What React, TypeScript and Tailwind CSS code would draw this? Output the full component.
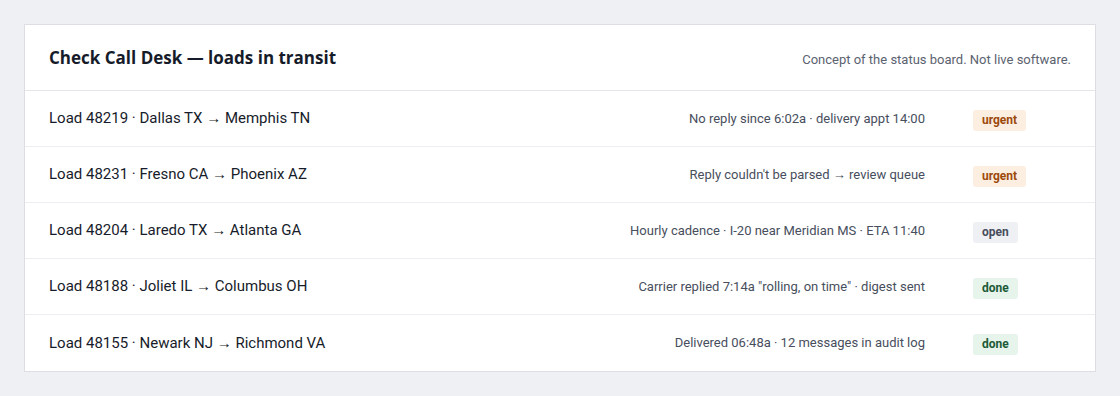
const rows = [
  {
    route: "Load 48219 · Dallas TX → Memphis TN",
    detail: "No reply since 6:02a · delivery appt 14:00",
    status: "urgent",
  },
  {
    route: "Load 48231 · Fresno CA → Phoenix AZ",
    detail: "Reply couldn't be parsed → review queue",
    status: "urgent",
  },
  {
    route: "Load 48204 · Laredo TX → Atlanta GA",
    detail: "Hourly cadence · I-20 near Meridian MS · ETA 11:40",
    status: "open",
  },
  {
    route: "Load 48188 · Joliet IL → Columbus OH",
    detail: 'Carrier replied 7:14a "rolling, on time" · digest sent',
    status: "done",
  },
  {
    route: "Load 48155 · Newark NJ → Richmond VA",
    detail: "Delivered 06:48a · 12 messages in audit log",
    status: "done",
  },
];

const badgeStyles: Record<string, string> = {
  urgent: "bg-[#fdeee2] text-[#9c4a0b]",
  open: "bg-[#eff0f4] text-[#474d5c]",
  done: "bg-[#e6f4eb] text-[#1c5a37]",
};

export default function App() {
  return (
    <div className="min-h-screen bg-[#eff0f3] p-6 font-[Roboto,'Noto_Sans',sans-serif]">
      <div className="border border-[#dcdee4] bg-white">
        <div className="flex h-[66px] items-baseline justify-between border-b border-[#e4e6ea] px-6 pt-[20px]">
          <h1 className="font-['Open_Sans',sans-serif] text-[17px] font-bold text-[#161b2a]">
            Check Call Desk — loads in transit
          </h1>
          <p className="text-[13px] text-[#5b6270]">
            Concept of the status board. Not live software.
          </p>
        </div>
        {rows.map((r, i) => (
          <div
            key={r.route}
            className={`flex h-[56px] items-center px-6 ${
              i < rows.length - 1 ? "border-b border-[#eceef1]" : ""
            }`}
          >
            <span className="text-[15px] text-[#171c2b]">{r.route}</span>
            <span className="ml-auto text-[13px] text-[#474e5d]">{r.detail}</span>
            <div className="ml-12 w-[98px]">
              <span
                className={`inline-block rounded-[3px] px-[9px] py-[3px] text-[12px] leading-[15px] font-bold ${badgeStyles[r.status]}`}
              >
                {r.status}
              </span>
            </div>
          </div>
        ))}
      </div>
    </div>
  );
}
